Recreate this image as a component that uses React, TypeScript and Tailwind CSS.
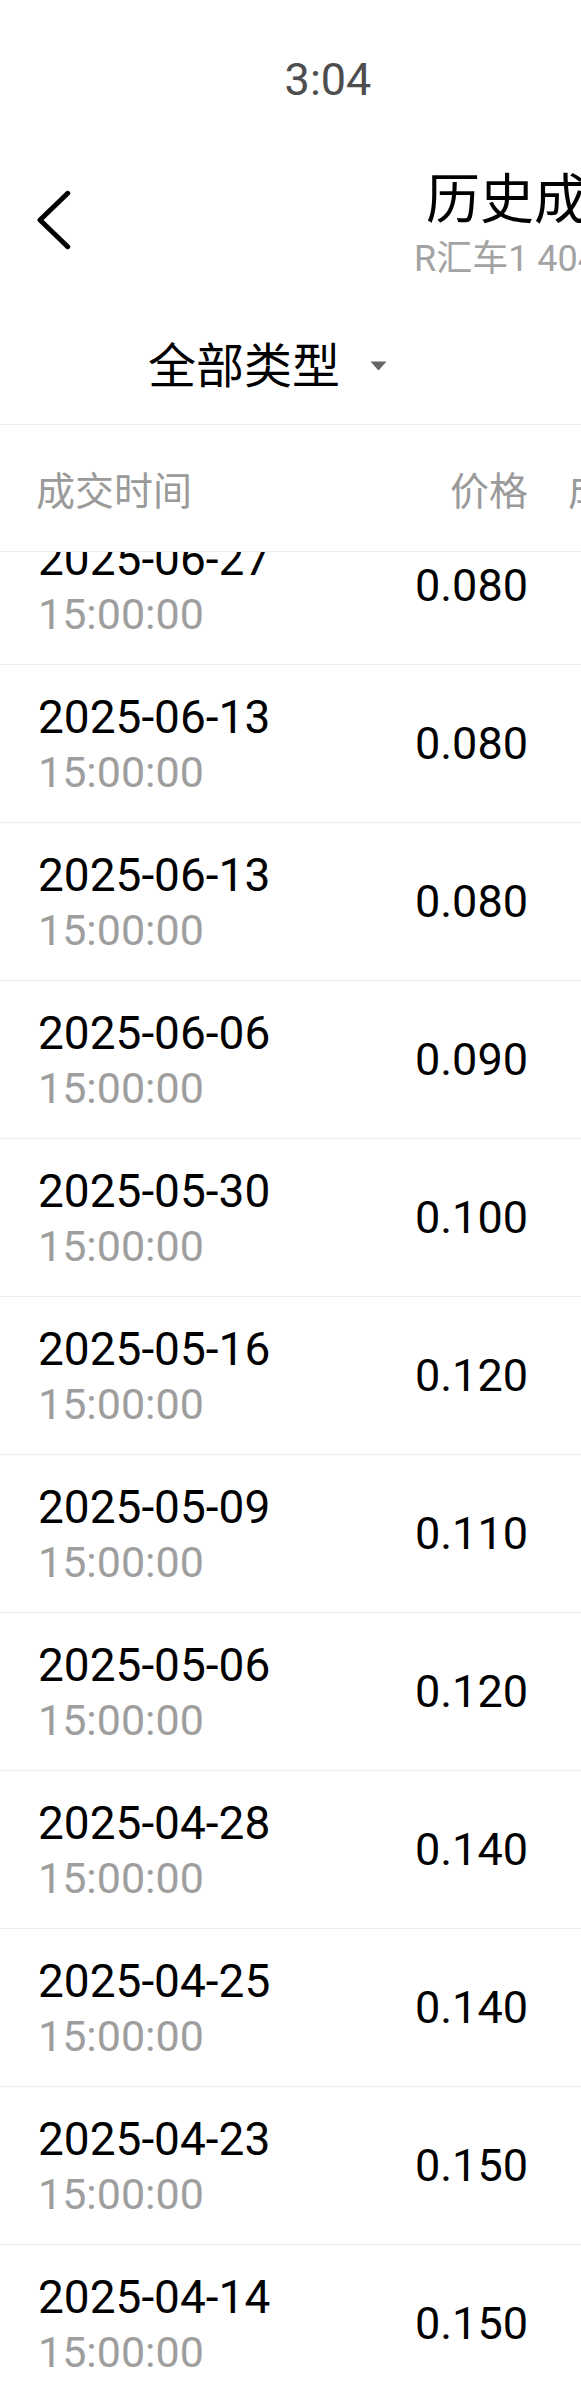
const trades = [
  { date: "2025-06-27", price: "0.080" },
  { date: "2025-06-13", price: "0.080" },
  { date: "2025-06-13", price: "0.080" },
  { date: "2025-06-06", price: "0.090" },
  { date: "2025-05-30", price: "0.100" },
  { date: "2025-05-16", price: "0.120" },
  { date: "2025-05-09", price: "0.110" },
  { date: "2025-05-06", price: "0.120" },
  { date: "2025-04-28", price: "0.140" },
  { date: "2025-04-25", price: "0.140" },
  { date: "2025-04-23", price: "0.150" },
  { date: "2025-04-14", price: "0.150" },
];

function BackIcon() {
  return (
    <svg width="34" height="60" viewBox="0 0 34 60" fill="none" className="mt-[30px] ml-[37px] shrink-0">
      <polyline
        points="30.7,3.3 3,30 30.7,56.7"
        stroke="#000"
        strokeWidth="5"
        strokeLinecap="round"
        strokeLinejoin="round"
      />
    </svg>
  );
}

export default function App() {
  return (
    <div className="w-full overflow-hidden bg-white font-['Roboto','Noto_Sans_CJK_SC',sans-serif]">
      {/* status bar */}
      <div className="h-[160px] flex justify-center pt-[58px]">
        <span className="text-[45px] leading-[44px] text-[#4d4d4d] ml-[75px]">3:04</span>
      </div>

      {/* nav */}
      <div className="h-[140px] flex items-start">
        <BackIcon />
        <div className="ml-[355px] flex flex-col items-start whitespace-nowrap">
          <div className="mt-[6px] text-[54px] leading-[60px] text-black font-['Noto_Sans_CJK_SC',sans-serif]">
            历史成交
          </div>
          <div className="mt-[13px] -ml-[12px] text-[36px] leading-[40px] text-[#a3a3a3] font-['Roboto','Noto_Sans_CJK_SC',sans-serif]">
            R汇车1 404002
          </div>
        </div>
      </div>

      {/* filter */}
      <div className="h-[125px] flex items-center pl-[148px] border-b border-[#eeeeee]">
        <span className="text-[48px] leading-[56px] text-black font-['Noto_Sans_CJK_SC',sans-serif]">全部类型</span>
        <svg width="17" height="10" viewBox="0 0 17 10" className="ml-[30px] mt-[8px]">
          <polygon points="0.5,0.5 16.5,0.5 8.5,9.5" fill="#666666" />
        </svg>
      </div>

      {/* table header */}
      <div className="relative z-10 h-[127px] flex items-center pl-[36px] bg-white border-b border-[#eeeeee] whitespace-nowrap text-[39px] leading-[48px] text-[#9a9a9a] font-['Noto_Sans_CJK_SC',sans-serif]">
        <div className="w-[334px] shrink-0">成交时间</div>
        <div className="w-[158px] shrink-0 text-right">价格</div>
        <div className="ml-[40px] shrink-0">成交量</div>
      </div>

      {/* rows, scrolled a little under the header */}
      <div className="overflow-hidden">
        <div className="-mt-[45px]">
          {trades.map((t, i) => (
            <div key={i} className="h-[158px] flex border-b border-[#eeeeee] pl-[38px] whitespace-nowrap">
              <div className="w-[330px] shrink-0 flex flex-col pt-[26px]">
                <span className="text-[46px] leading-[52px] text-black">{t.date}</span>
                <span className="text-[43px] leading-[58px] text-[#9e9e9e]">15:00:00</span>
              </div>
              <div className="w-[160px] shrink-0 self-center text-right text-[45px] leading-[52px] text-black">
                {t.price}
              </div>
            </div>
          ))}
        </div>
      </div>
    </div>
  );
}
